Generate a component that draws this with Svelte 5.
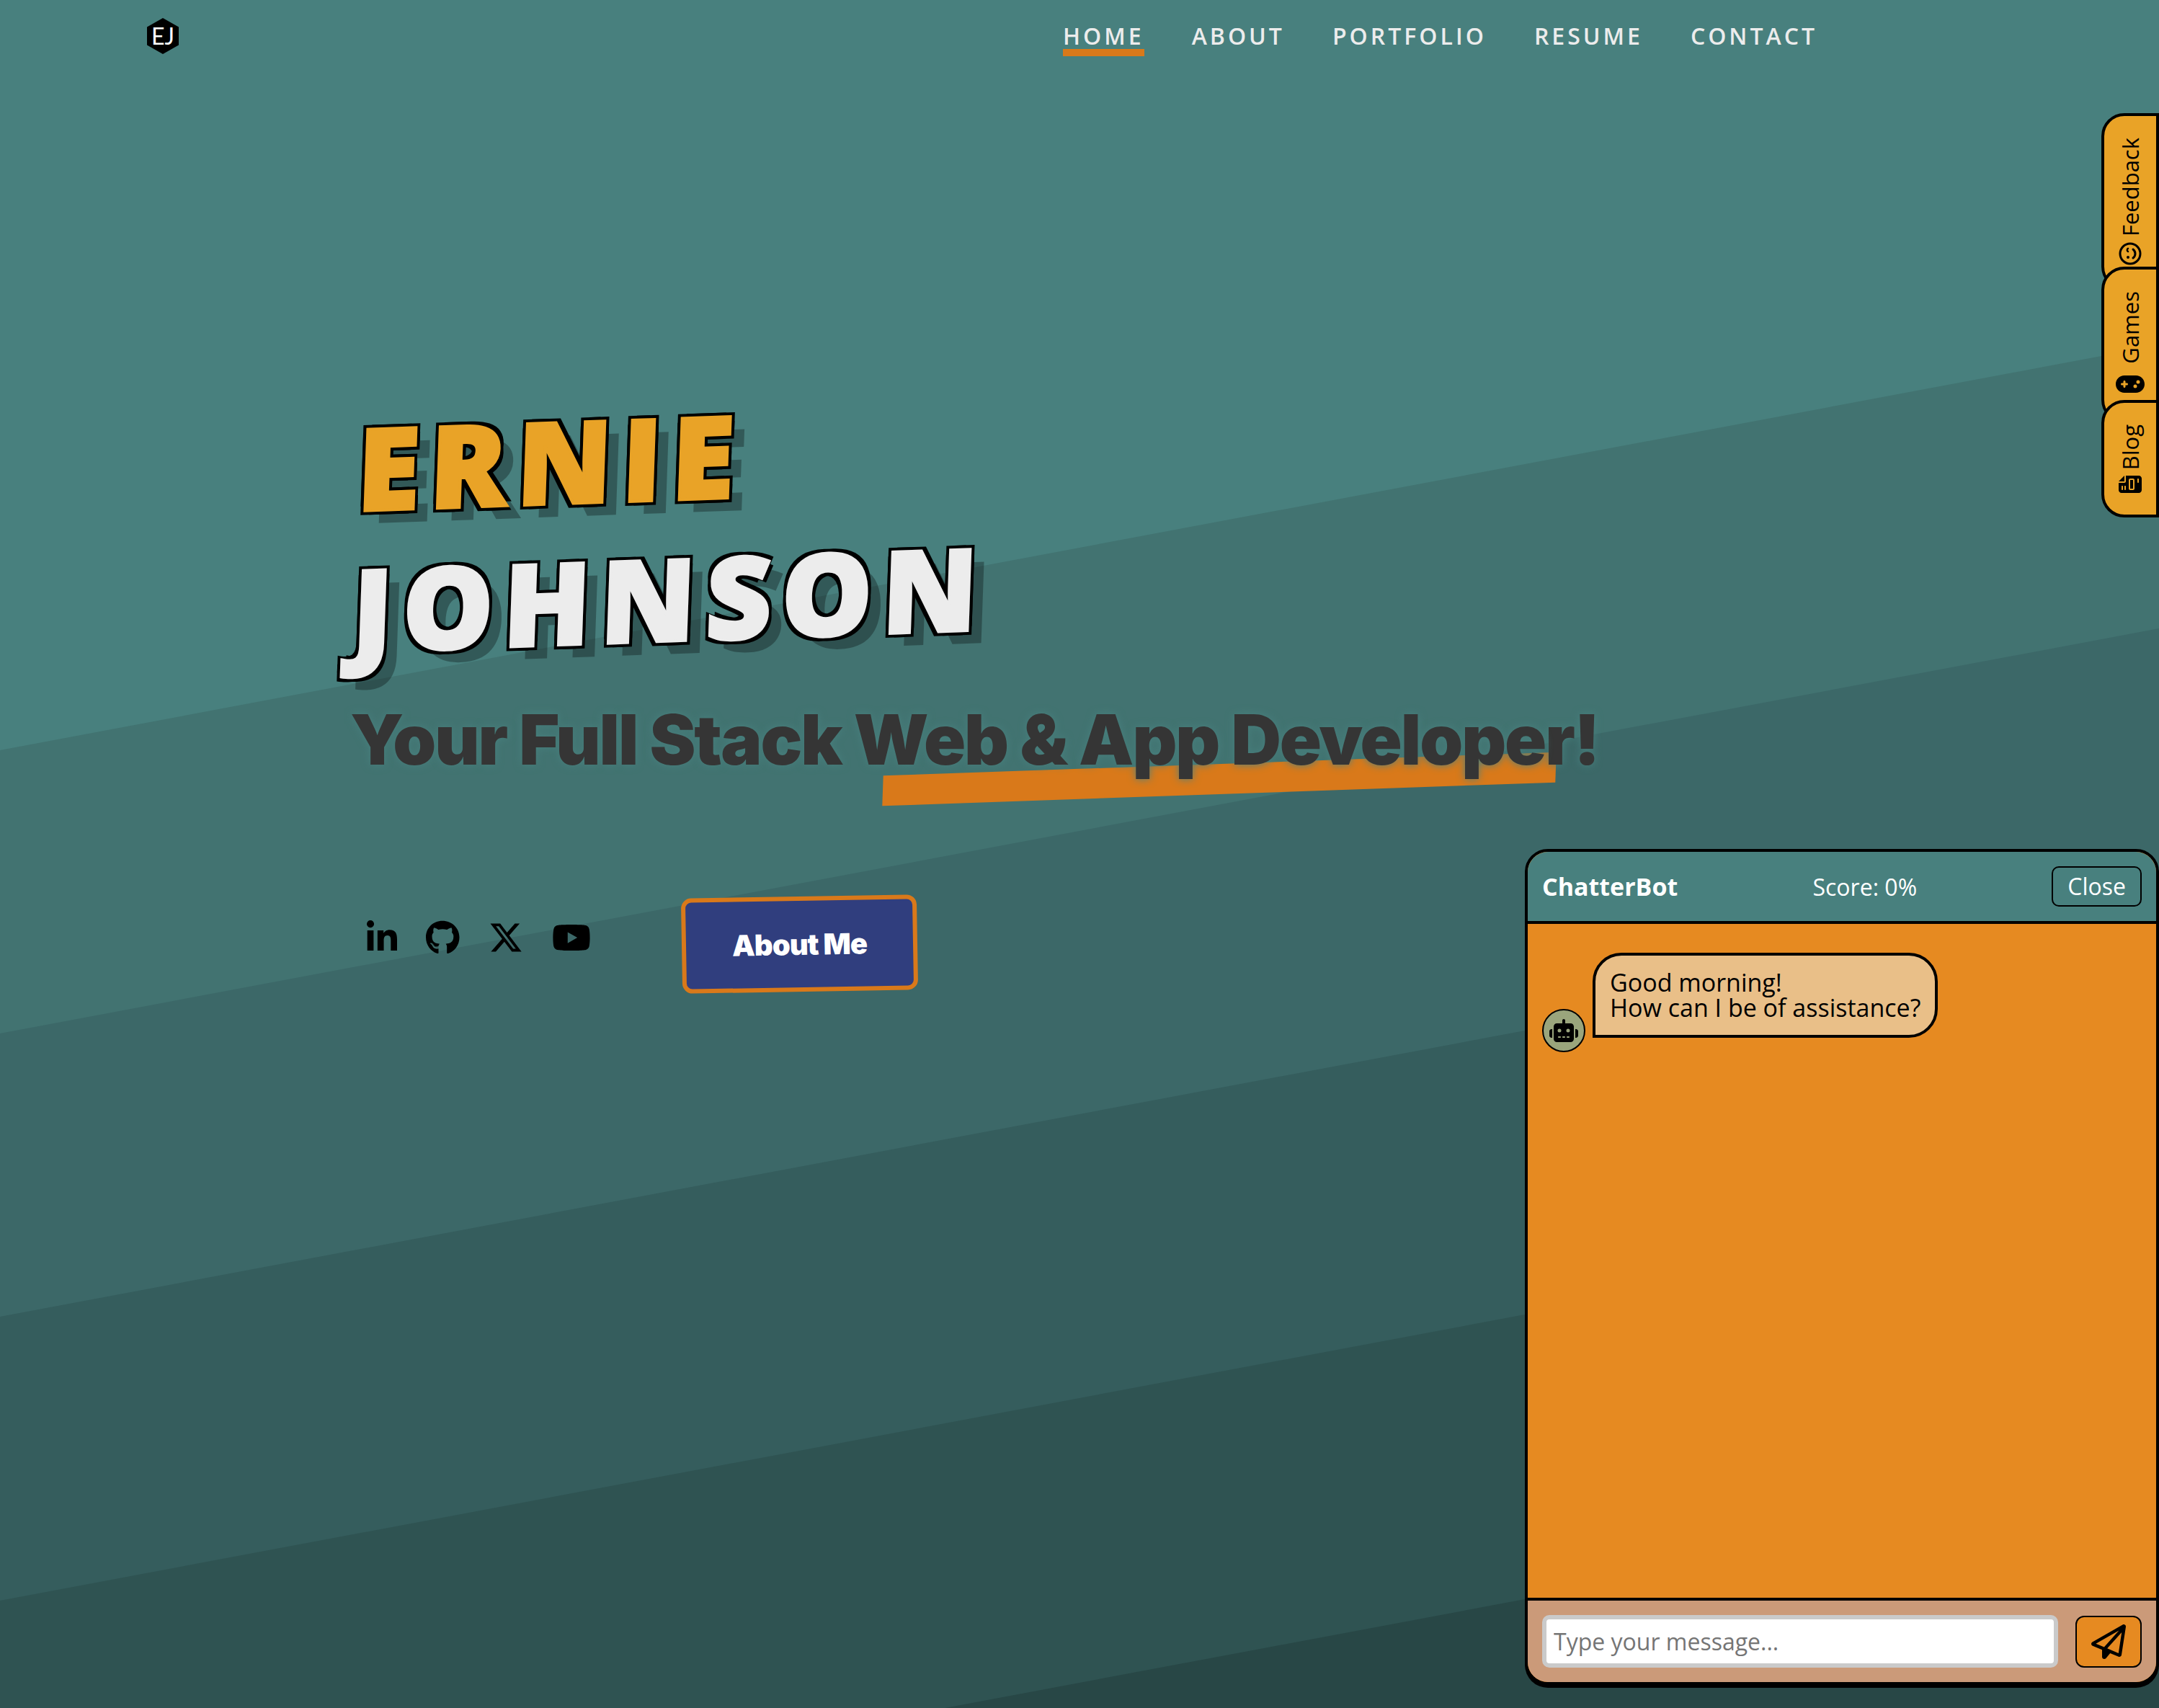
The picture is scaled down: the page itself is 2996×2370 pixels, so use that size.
<script>
  const navItems = ['Home', 'About', 'Portfolio', 'Resume', 'Contact'];
  const current = 'Home';

  const socials = [
    {
      name: 'LinkedIn',
      width: 448,
      path: 'M100.28 448H7.4V148.9h92.88zM53.79 108.1C24.09 108.1 0 83.5 0 53.8a53.79 53.79 0 0 1 107.58 0c0 29.7-24.1 54.3-53.79 54.3zM447.9 448h-92.68V302.4c0-34.7-.7-79.2-48.29-79.2-48.29 0-55.69 37.7-55.69 76.7V448h-92.78V148.9h89.08v40.8h1.3c12.4-23.5 42.69-48.3 87.88-48.3 94 0 111.28 61.9 111.28 142.3V448z'
    },
    {
      name: 'GitHub',
      width: 496,
      path: 'M165.9 397.4c0 2-2.3 3.6-5.2 3.6-3.3.3-5.6-1.3-5.6-3.6 0-2 2.3-3.6 5.2-3.6 3-.3 5.6 1.3 5.6 3.6zm-31.1-4.5c-.7 2 1.3 4.3 4.3 4.9 2.6 1 5.6 0 6.2-2s-1.3-4.3-4.3-5.2c-2.6-.7-5.5.3-6.2 2.3zm44.2-1.7c-2.9.7-4.9 2.6-4.6 4.9.3 2 2.9 3.3 5.9 2.6 2.9-.7 4.9-2.6 4.6-4.6-.3-1.9-3-3.2-5.9-2.9zM244.8 8C106.1 8 0 113.3 0 252c0 110.9 69.8 205.8 169.5 239.2 12.8 2.3 17.3-5.6 17.3-12.1 0-6.2-.3-40.4-.3-61.4 0 0-70 15-84.7-29.8 0 0-11.4-29.1-27.8-36.6 0 0-22.9-15.7 1.6-15.4 0 0 24.9 2 38.6 25.8 21.9 38.6 58.6 27.5 72.9 20.9 2.3-16 8.8-27.1 16-33.7-55.9-6.2-112.3-14.3-112.3-110.5 0-27.5 7.6-41.3 23.6-58.9-2.6-6.5-11.1-33.3 2.6-67.9 20.9-6.5 69 27 69 27 20-5.6 41.5-8.5 62.8-8.5s42.8 2.9 62.8 8.5c0 0 48.1-33.6 69-27 13.7 34.7 5.2 61.4 2.6 67.9 16 17.7 25.8 31.5 25.8 58.9 0 96.5-58.9 104.2-114.8 110.5 9.2 7.9 17 22.9 17 46.4 0 33.7-.3 75.4-.3 83.6 0 6.5 4.6 14.4 17.3 12.1C428.2 457.8 496 362.9 496 252 496 113.3 383.5 8 244.8 8zM97.2 352.9c-1.3 1-1 3.3.7 5.2 1.6 1.6 3.9 2.3 5.2 1 1.3-1 1-3.3-.7-5.2-1.6-1.6-3.9-2.3-5.2-1zm-10.8-8.1c-.7 1.3.3 2.9 2.3 3.9 1.6 1 3.6.7 4.3-.7.7-1.3-.3-2.9-2.3-3.9-2-.6-3.6-.3-4.3.7zm32.4 35.6c-1.6 1.3-1 4.3 1.3 6.2 2.3 2.3 5.2 2.6 6.5 1 1.3-1.3.7-4.3-1.3-6.2-2.2-2.3-5.2-2.6-6.5-1zm-11.4-14.7c-1.6 1-1.6 3.6 0 5.9 1.6 2.3 4.3 3.3 5.6 2.3 1.6-1.3 1.6-3.9 0-6.2-1.4-2.3-4-3.3-5.6-2z'
    },
    {
      name: 'X',
      width: 512,
      path: 'M389.2 48h70.6L305.6 224.2 487 464H345L233.7 318.6 106.5 464H35.8L200.7 275.5 26.8 48H172.4L272.9 180.9 389.2 48zM364.4 421.8h39.1L151.1 88h-42L364.4 421.8z'
    },
    {
      name: 'YouTube',
      width: 576,
      path: 'M549.655 124.083c-6.281-23.65-24.787-42.276-48.284-48.597C458.781 64 288 64 288 64S117.22 64 74.629 75.486c-23.497 6.322-42.003 24.947-48.284 48.597-11.412 42.867-11.412 132.305-11.412 132.305s0 89.438 11.412 132.305c6.281 23.65 24.787 41.5 48.284 47.821C117.22 448 288 448 288 448s170.78 0 213.371-11.486c23.497-6.321 42.003-24.171 48.284-47.821 11.412-42.867 11.412-132.305 11.412-132.305s0-89.438-11.412-132.305zm-317.51 213.508V175.185l142.739 81.205-142.739 81.201z'
    }
  ];

  let message = $state('');
</script>

<div class="page">
  <svg class="bands" viewBox="0 0 2996 2370" preserveAspectRatio="none" aria-hidden="true">
    <path fill="#427371" d="M0 1041 2996 479V2370H0z" />
    <path fill="#3c6868" d="M0 1434 2996 872V2370H0z" />
    <path fill="#355d5d" d="M0 1827 2996 1265V2370H0z" />
    <path fill="#2f5352" d="M0 2221 2996 1659V2370H0z" />
    <path fill="#284746" d="M0 2616 2996 2054V2370H0z" />
  </svg>

  <header class="topbar">
    <a class="logo" href="#home">EJ</a>
    <nav>
      {#each navItems as item}
        <a href="#{item.toLowerCase()}" class:current={item === current}>{item}</a>
      {/each}
    </nav>
  </header>

  <main>
    <h1>
      <span class="first">Ernie</span>
      <span class="last">Johnson</span>
    </h1>
    <h2>Your Full Stack <span class="marked">Web &amp; App Develope</span>r!</h2>
    <div class="actions">
      <ul class="socials">
        {#each socials as s}
          <li>
            <a href="#{s.name.toLowerCase()}" aria-label={s.name}>
              <svg height="48" viewBox="0 0 {s.width} 512"><path d={s.path} /></svg>
            </a>
          </li>
        {/each}
      </ul>
      <button class="about">About Me</button>
    </div>
  </main>

  <aside class="tabs">
    <a href="#feedback">
      <span>Feedback</span>
      <svg class="turned" width="32" height="32" viewBox="0 0 32 32" fill="none" stroke="#000" stroke-width="3" stroke-linecap="round">
        <circle cx="16" cy="16" r="14" />
        <path d="M10 20c3 4 9 4 12 0" />
        <path d="M19 13c1-1.600 3.200-1.600 4.200 0" stroke-width="2.500" />
        <circle cx="11" cy="13" r="2" fill="#000" stroke="none" />
      </svg>
    </a>
    <a href="#games">
      <span>Games</span>
      <svg width="40" height="40" viewBox="0 -64 640 640"><path d="M192 64C86 64 0 150 0 256S86 448 192 448H448c106 0 192-86 192-192s-86-192-192-192H192zM496 168a40 40 0 1 1 0 80 40 40 0 1 1 0-80zM392 304a40 40 0 1 1 80 0 40 40 0 1 1 -80 0zM168 200c0-13.300 10.700-24 24-24s24 10.700 24 24v32h32c13.300 0 24 10.700 24 24s-10.700 24-24 24H216v32c0 13.300-10.700 24-24 24s-24-10.700-24-24V280H136c-13.300 0-24-10.700-24-24s10.700-24 24-24h32V200z" /></svg>
    </a>
    <a href="#blog">
      <span>Blog</span>
      <svg width="32" height="24" viewBox="0 0 512 384"><path transform="translate(0 384) rotate(-90)" d="M64 0C28.700 0 0 28.700 0 64V448c0 35.300 28.700 64 64 64H320c35.300 0 64-28.700 64-64V160H256c-17.700 0-32-14.300-32-32V0H64zM256 0V128H384L256 0zM80 64h64c8.800 0 16 7.200 16 16s-7.200 16-16 16H80c-8.800 0-16-7.200-16-16s7.200-16 16-16zm0 64h64c8.800 0 16 7.200 16 16s-7.200 16-16 16H80c-8.800 0-16-7.200-16-16s7.200-16 16-16zm16 96H288c17.700 0 32 14.300 32 32v64c0 17.700-14.300 32-32 32H96c-17.700 0-32-14.300-32-32V256c0-17.700 14.300-32 32-32zm0 32v64H288V256H96zM240 416h64c8.800 0 16 7.200 16 16s-7.200 16-16 16H240c-8.800 0-16-7.200-16-16s7.200-16 16-16z" /></svg>
    </a>
  </aside>

  <section class="chat" aria-label="ChatterBot">
    <div class="chat-head">
      <strong>ChatterBot</strong>
      <span>Score: 0%</span>
      <button class="close">Close</button>
    </div>
    <div class="chat-body">
      <div class="message">
        <div class="avatar">
          <svg width="40" height="32" viewBox="0 0 640 512"><path d="M320 0c17.700 0 32 14.300 32 32V96H472c39.800 0 72 32.200 72 72V440c0 39.800-32.200 72-72 72H168c-39.800 0-72-32.200-72-72V168c0-39.800 32.200-72 72-72H288V32c0-17.700 14.300-32 32-32zM208 384c-8.800 0-16 7.200-16 16s7.200 16 16 16h32c8.800 0 16-7.200 16-16s-7.200-16-16-16H208zm96 0c-8.800 0-16 7.200-16 16s7.200 16 16 16h32c8.800 0 16-7.200 16-16s-7.200-16-16-16H304zm96 0c-8.800 0-16 7.200-16 16s7.200 16 16 16h32c8.800 0 16-7.200 16-16s-7.200-16-16-16H400zM264 256a40 40 0 1 0-80 0 40 40 0 1 0 80 0zm152 40a40 40 0 1 0 0-80 40 40 0 1 0 0 80zM48 224H64V416H48c-26.500 0-48-21.500-48-48V272c0-26.500 21.500-48 48-48zm544 0c26.500 0 48 21.500 48 48v96c0 26.500-21.500 48-48 48H576V224h16z" /></svg>
        </div>
        <p>Good morning!<br />How can I be of assistance?</p>
      </div>
    </div>
    <form class="chat-foot" onsubmit={(e) => e.preventDefault()}>
      <input type="text" aria-label="Message" placeholder="Type your message..." bind:value={message} />
      <button class="send" aria-label="Send">
        <svg width="48" height="48" viewBox="0 0 512 512"><path d="M16.100 260.200c-22.600 12.900-20.500 47.300 3.600 57.300L160 376V479.300c0 18.100 14.600 32.700 32.700 32.700c9.700 0 18.900-4.300 25.100-11.800l62-74.300 123.900 51.600c18.900 7.900 40.800-4.500 43.900-24.700l64-416c1.900-12.100-3.400-24.300-13.500-31.200s-23.300-7.500-34-1.400l-448 256zm52.100 25.500L409.700 90.600 190.100 336l1.200 1L68.200 285.700zM403.300 425.400L236.700 355.900 450.800 116.600 403.300 425.400z" /></svg>
      </button>
    </form>
  </section>
</div>

<style>
  :global(body) {
    margin: 0;
  }

  .page {
    position: relative;
    min-height: 100vh;
    background: #48807e;
    font-family: 'Open Sans', 'Noto Sans', sans-serif;
    font-size: 32px;
    color: #000;
    overflow: hidden;
    isolation: isolate;
  }

  .page *,
  .page *::after {
    box-sizing: border-box;
  }

  .bands {
    position: absolute;
    inset: 0;
    width: 100%;
    height: 100%;
    z-index: -2;
  }

  svg {
    display: block;
  }

  a {
    color: inherit;
    text-decoration: none;
  }

  button,
  input {
    font: inherit;
    color: inherit;
    margin: 0;
  }

  .topbar {
    display: flex;
    align-items: center;
    justify-content: space-between;
    height: 100px;
    padding: 0 474px 0 204px;
  }

  .logo {
    display: flex;
    align-items: center;
    justify-content: center;
    width: 44px;
    height: 50px;
    background: #000;
    clip-path: polygon(50% 0, 100% 25%, 100% 75%, 50% 100%, 0 75%, 0 25%);
    color: #fff;
    font-family: Lato, sans-serif;
    font-size: 32px;
    line-height: 50px;
  }

  nav {
    display: flex;
    gap: 66px;
  }

  nav a {
    border-bottom: 10px solid transparent;
    margin-top: 10px;
    color: #ececec;
    font-weight: 600;
    line-height: 36px;
    letter-spacing: 4px;
    text-transform: uppercase;
  }

  nav a.current {
    border-color: #d9791a;
  }

  main {
    padding: 450px 0 0 486px;
  }

  h1 {
    margin: 0;
    font-size: 158px;
    font-weight: 800;
    line-height: 196px;
    text-transform: uppercase;
    letter-spacing: 14px;
    transform: skew(-2deg, -2deg);
    transform-origin: 0 100%;
    text-shadow:
      -6px -6px 0 #000,
      6px -6px 0 #000,
      -6px 6px 0 #000,
      6px 6px 0 #000,
      20px 18px 0 rgb(0 0 0 / 30%);
  }

  h1 span {
    display: block;
    width: fit-content;
    -webkit-text-stroke: 4px currentColor;
  }

  .first {
    color: #e9a327;
  }

  .last {
    color: #ececec;
  }

  h2 {
    margin: 26px 0 0;
    font-family: Inter, sans-serif;
    font-size: 96px;
    font-weight: 900;
    line-height: 116px;
    letter-spacing: -2px;
    color: #353535;
    text-shadow: 0 0 12px #48807e;
    white-space: nowrap;
  }

  .marked {
    position: relative;
  }

  .marked::after {
    content: '';
    position: absolute;
    z-index: -1;
    left: 40px;
    right: -14px;
    bottom: -18px;
    height: 42px;
    background: #d9791a;
    transform: skew(-2deg, -2deg);
  }

  .actions {
    display: flex;
    align-items: center;
    gap: 126px;
    margin-top: 160px;
    padding-left: 23px;
  }

  .socials {
    display: flex;
    gap: 40px;
    margin: 0;
    padding: 0 0 18px;
    list-style: none;
  }

  .about {
    height: 132px;
    padding: 0 64px;
    border: 6px solid #d9791a;
    border-radius: 14px;
    background: #303e7e;
    color: #fff;
    font-family: Inter, sans-serif;
    font-size: 40px;
    font-weight: 900;
    letter-spacing: -1px;
    transform: rotate(-1deg);
  }

  .tabs {
    position: absolute;
    top: 157px;
    right: 0;
    display: flex;
    flex-direction: column;
  }

  .tabs a {
    display: flex;
    flex-direction: column;
    align-items: center;
    gap: 8px;
    width: 80px;
    padding: 30px 0;
    border: 4px solid #000;
    border-radius: 32px 0 0 32px;
    background: #e9a327;
    font-size: 31px;
    line-height: 40px;
  }

  .tabs a + a {
    margin-top: -32px;
  }

  .tabs span {
    writing-mode: vertical-rl;
    transform: rotate(180deg);
  }

  .turned {
    transform: rotate(-90deg);
  }

  .chat {
    position: absolute;
    right: 0;
    bottom: 32px;
    display: flex;
    flex-direction: column;
    width: 880px;
    height: 1160px;
    border: 4px solid #000;
    border-radius: 32px;
    background: #e68a21;
    box-shadow: 0 4px 0 #000;
    overflow: hidden;
  }

  .chat-head {
    display: flex;
    align-items: center;
    justify-content: space-between;
    padding: 20px;
    border-bottom: 4px solid #000;
    background: #48807e;
    color: #fff;
  }

  .chat-head strong {
    font-size: 34px;
    font-weight: 700;
    line-height: 40px;
  }

  .close {
    min-width: 124px;
    height: 56px;
    padding: 0 20px;
    border: 2px solid #000;
    border-radius: 10px;
    background: none;
    line-height: 40px;
  }

  .chat-body {
    flex: 1;
    padding: 40px 20px;
  }

  .message {
    display: flex;
    align-items: flex-end;
    gap: 10px;
  }

  .avatar {
    display: grid;
    place-items: center;
    width: 60px;
    height: 60px;
    margin-bottom: -20px;
    border: 2px solid #000;
    border-radius: 50%;
    background: #9aa57c;
  }

  .message p {
    margin: 0;
    padding: 20px;
    border: 4px solid #000;
    border-radius: 40px 40px 40px 0;
    background: #e9bf88;
    font-size: 34px;
    line-height: 35px;
  }

  .chat-foot {
    display: flex;
    align-items: center;
    gap: 24px;
    padding: 20px;
    border-top: 4px solid #000;
    background: #cb9a79;
  }

  .chat-foot input {
    flex: 1;
    min-width: 0;
    height: 73px;
    padding: 0 10px;
    border: 6px solid #cacaca;
    border-radius: 10px;
    background: #fff;
  }

  .chat-foot input::placeholder {
    color: #757575;
    opacity: 1;
  }

  .send {
    display: grid;
    place-items: center;
    width: 92px;
    height: 72px;
    padding: 0;
    border: 2px solid #000;
    border-radius: 12px;
    background: #e68a21;
  }
</style>
